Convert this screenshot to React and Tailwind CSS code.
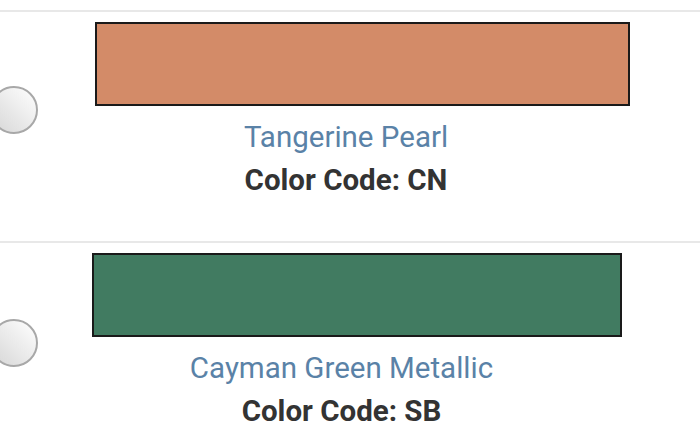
import React from 'react';

const colors = [
  { name: 'Tangerine Pearl', code: 'CN', hex: '#d38b68', left: 'ml-[67px]', width: 'w-[535px]', radioTop: 'mt-[74px]', textPad: 'pr-[36px]' },
  { name: 'Cayman Green Metallic', code: 'SB', hex: '#417b61', left: 'ml-[64px]', width: 'w-[530px]', radioTop: 'mt-[76px]', textPad: 'pr-[45px]' },
];

const ColorRow = ({ name, code, hex, left, width, radioTop, textPad }) => (
  <div className="flex border-t-2 border-[#e8e8e8] h-[231px]">
    <div className="w-[38px] -ml-[10px] shrink-0">
      <div
        className={`${radioTop} w-[48px] h-[48px] rounded-full border-2 border-[#a8a8a8] bg-linear-to-bl from-white to-[#d6d6d6]`}
      />
    </div>
    <div className="flex-1 pt-[10px]">
      <div
        className={`${left} ${width} h-[84px] border-2 border-[#1a1a1a]`}
        style={{ backgroundColor: hex }}
      />
      <div className={`${textPad} text-center mt-[14px]`}>
        <p className="text-[29.5px] leading-[34px] text-[#5a82a7]">{name}</p>
        <p className="mt-[9px] text-[29.5px] leading-[34px] font-bold text-[#333333]">
          Color Code: {code}
        </p>
      </div>
    </div>
  </div>
);

const App = () => (
  <div
    className="w-[700px] h-[443px] overflow-hidden bg-white pt-[10px]"
    style={{ fontFamily: 'Roboto, "Liberation Sans", sans-serif' }}
  >
    {colors.map((c) => (
      <ColorRow key={c.code} {...c} />
    ))}
  </div>
);

export default App;
